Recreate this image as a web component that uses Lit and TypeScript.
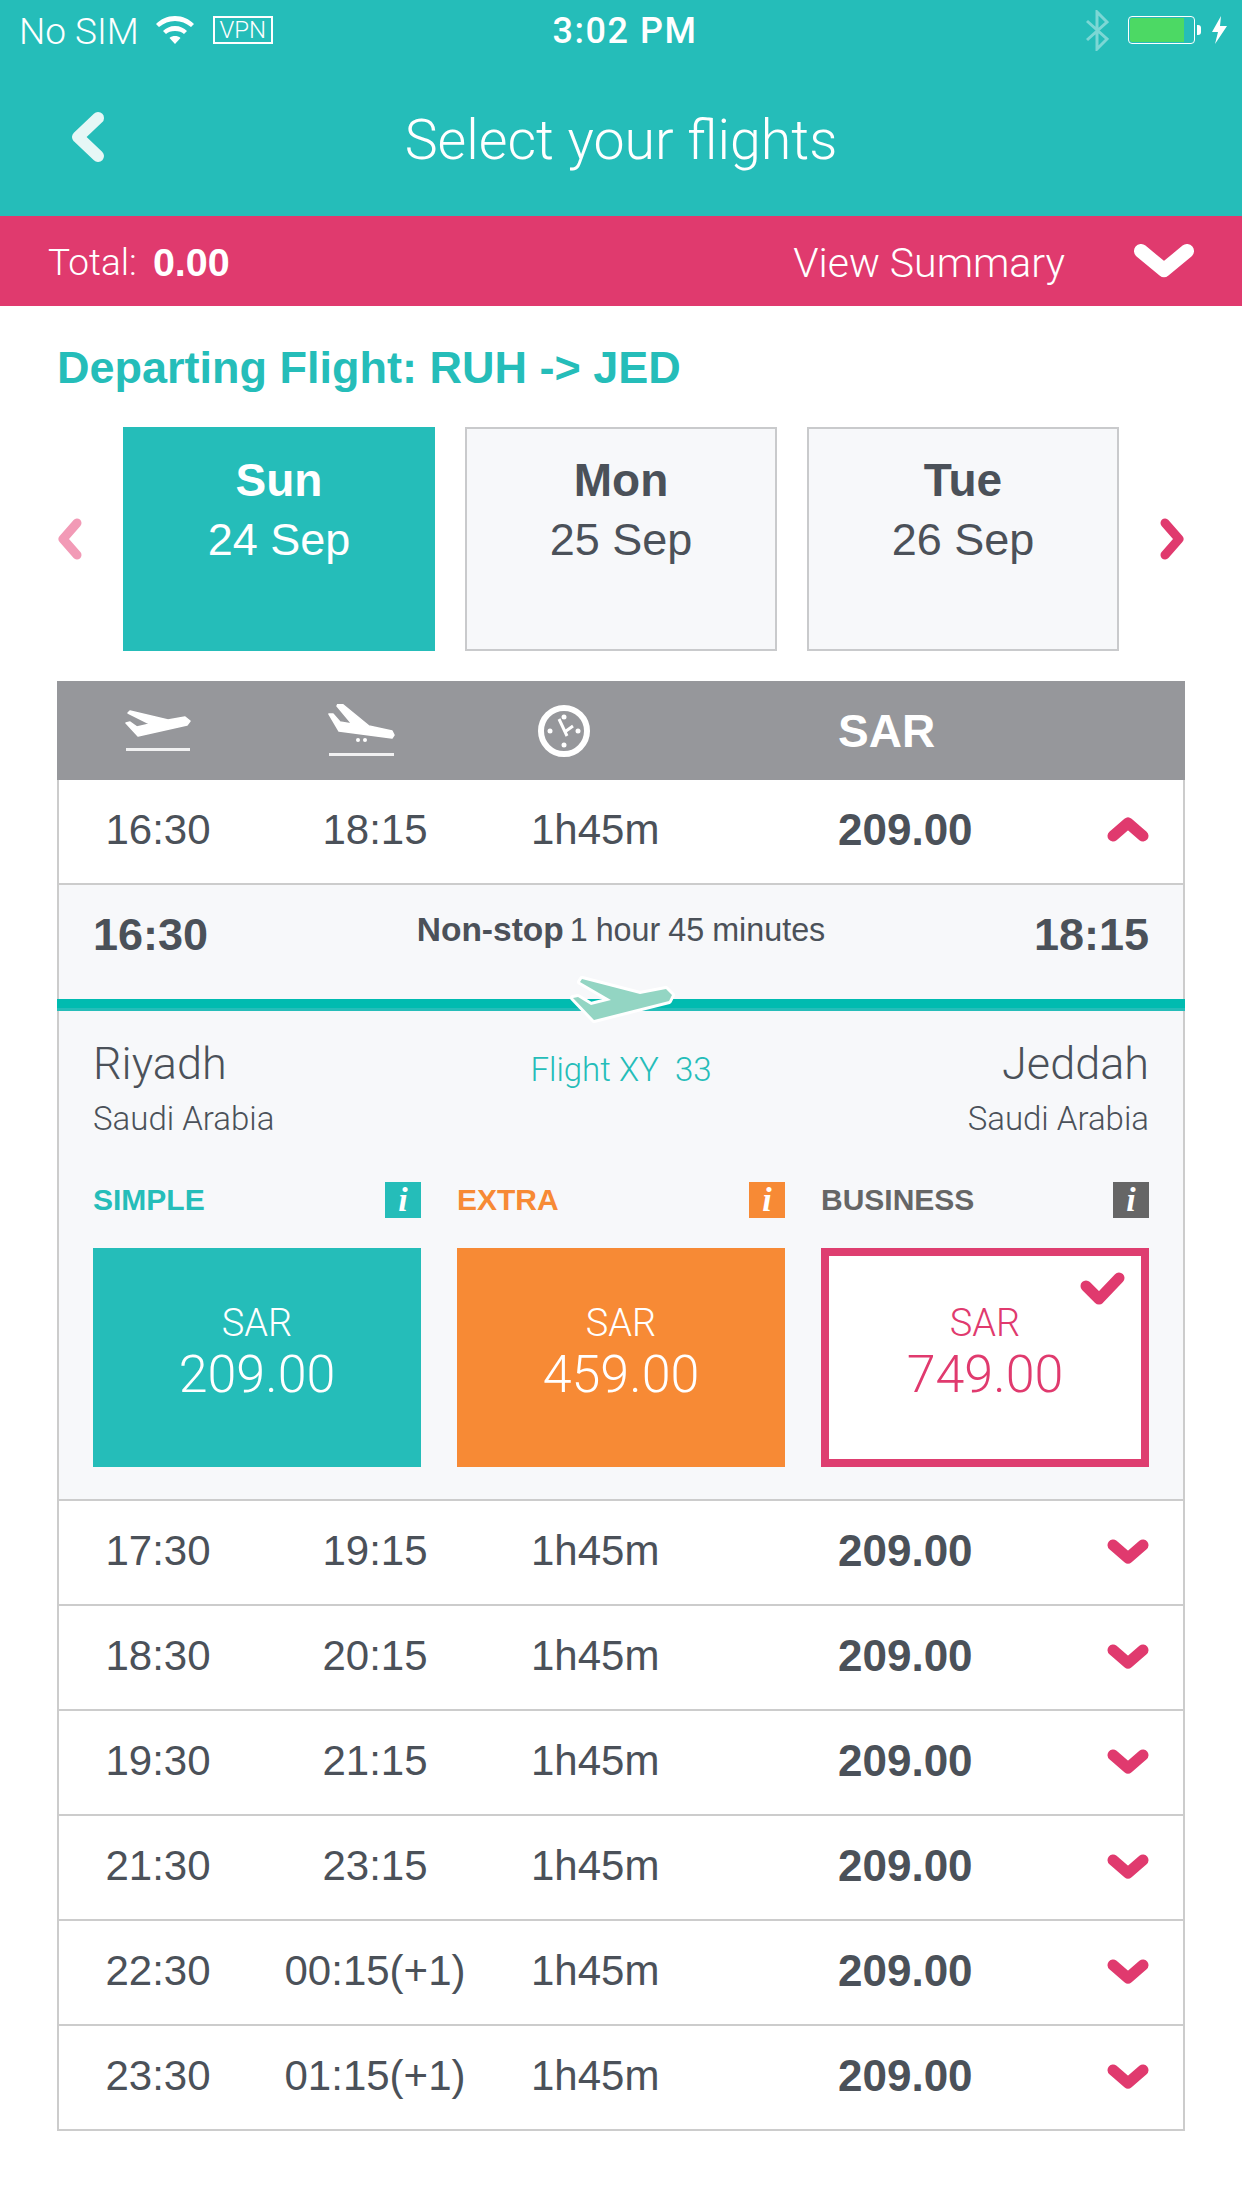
import { LitElement, html, css, svg } from 'lit';
import { customElement } from 'lit/decorators.js';

const flights = [
  ['17:30', '19:15'],
  ['18:30', '20:15'],
  ['19:30', '21:15'],
  ['21:30', '23:15'],
  ['22:30', '00:15(+1)'],
  ['23:30', '01:15(+1)'],
];

const fares = [
  { name: 'SIMPLE', cls: 'simple', price: '209.00' },
  { name: 'EXTRA', cls: 'extra', price: '459.00' },
  { name: 'BUSINESS', cls: 'business', price: '749.00' },
];

const chevron = (dir: 'up' | 'down') => html`
  <svg class="row-chevron" viewBox="0 0 42 26">
    ${dir === 'down'
      ? svg`<path d="M6 7 L21 20 L36 7" />`
      : svg`<path d="M6 19 L21 6 L36 19" />`}
  </svg>
`;

@customElement('app-root')
export class AppRoot extends LitElement {
  static styles = css`
    :host {
      display: block;
      width: 1242px;
      height: 2208px;
      background: #fff;
      font-family: 'Liberation Sans', Arial, sans-serif;
      color: #4b5159;
      overflow: hidden;
      --light: Roboto, 'Liberation Sans', sans-serif;
    }
    svg { display: block; }

    /* top bars */
    .top {
      background: #25bdb9;
      height: 216px;
      color: #fff;
      display: flex;
      flex-direction: column;
    }
    .status {
      height: 60px;
      display: grid;
      grid-template-columns: 1fr 1fr 1fr;
      align-items: center;
      font-size: 36px;
    }
    .status-left {
      display: flex;
      align-items: center;
      padding-left: 19px;
      font-family: var(--light);
      font-weight: 300;
      font-size: 37px;
    }
    .sim { padding-top: 2px; }
    .wifi { width: 38px; height: 28px; margin-left: 17px; }
    .vpn {
      margin-left: 19px;
      width: 60px;
      height: 28px;
      box-sizing: border-box;
      border: 2px solid #fff;
      font-size: 24px;
      line-height: 24px;
      text-align: center;
    }
    .clock-time {
      text-align: center;
      font-family: Roboto, sans-serif;
      font-weight: 500;
      font-size: 36px;
      letter-spacing: 1.5px;
      padding: 2px 0 0 8px;
    }
    .status-right {
      display: flex;
      align-items: center;
      justify-content: flex-end;
      padding-right: 15px;
    }
    .bt { width: 23px; height: 41px; margin-right: 19px; }
    .battery {
      width: 67px;
      height: 28px;
      box-sizing: border-box;
      border: 1px solid #fff;
      border-radius: 4px;
      padding: 1px;
    }
    .battery-fill {
      width: 54px;
      height: 100%;
      background: #4cd964;
      border-radius: 2px 0 0 2px;
    }
    .nub { width: 4px; height: 10px; background: #fff; margin-left: 2px; border-radius: 0 3px 3px 0; }
    .bolt { width: 16px; height: 28px; margin-left: 10px; }

    .nav {
      flex: 1;
      position: relative;
      display: flex;
      align-items: center;
      justify-content: center;
      padding-top: 6px;
    }
    .back { position: absolute; left: 71px; top: 52px; width: 33px; height: 50px; }
    .title { font-family: var(--light); font-weight: 300; font-size: 55.5px; line-height: 64px; }

    .summary {
      background: #e03a6e;
      height: 90px;
      color: #fff;
      display: flex;
      align-items: center;
      padding: 3px 48px 0;
      box-sizing: border-box;
      font-size: 37px;
    }
    .summary span { font-family: var(--light); font-weight: 300; }
    .summary b { margin-left: 16px; font-size: 39.5px; }
    .summary .view { margin-left: auto; font-size: 41px; }
    .view-chevron { width: 60px; height: 34px; margin-left: 69px; margin-top: -3px; }

    /* heading and date tabs */
    .heading {
      margin: 0;
      padding: 37px 57px 0;
      height: 85px;
      box-sizing: border-box;
      font-size: 45px;
      line-height: 50px;
      font-weight: 700;
      color: #25bdb9;
    }
    .dates {
      margin: 36px 57px 0;
      height: 224px;
      display: flex;
      align-items: center;
      justify-content: space-between;
    }
    .arrow { width: 26px; height: 44px; }
    .tabs { display: flex; gap: 30px; }
    .tab {
      width: 312px;
      height: 224px;
      box-sizing: border-box;
      border: 2px solid #c9cacc;
      background: #f7f8fa;
      text-align: center;
      padding-top: 22px;
      font-size: 45px;
      line-height: 59px;
    }
    .tab b { display: block; font-size: 46px; }
    .tab.active { background: #25bdb9; border-color: #25bdb9; color: #fff; }

    /* table */
    .table {
      margin: 30px 57px 0;
      box-sizing: border-box;
      width: 1128px;
      border: solid #ccc;
      border-width: 0 2px;
    }
    .row, .head {
      display: grid;
      grid-template-columns: 198px 236px 345px 1fr 76px;
      align-items: center;
      margin: 0;
    }
    .head {
      height: 99px;
      background: #96979b;
      margin: 0 -2px;
      padding: 0 2px;
      color: #fff;
      font-size: 46px;
      font-weight: 700;
    }
    .head svg { justify-self: center; }
    .head .clock-cell { padding-left: 45px; }
    .head .clock-cell svg { width: 52px; height: 52px; justify-self: start; }
    .takeoff { width: 66px; height: 44px; }
    .landing { width: 70px; height: 54px; margin-right: 26px; }
    .row {
      height: 105px;
      box-sizing: border-box;
      border-bottom: 2px solid #ccc;
      padding-bottom: 3px;
      font-size: 42px;
    }
    .c { text-align: center; }
    .dur { padding-left: 38px; }
    .price { font-size: 44px; font-weight: 700; }
    .row-chevron {
      width: 42px;
      height: 26px;
      fill: none;
      stroke: #e03a6e;
      stroke-width: 11;
      stroke-linecap: round;
      stroke-linejoin: round;
    }

    /* expanded flight */
    .detail {
      height: 616px;
      box-sizing: border-box;
      background: #f7f8fa;
      border-bottom: 2px solid #ccc;
      display: flex;
      flex-direction: column;
    }
    .detail-top {
      height: 114px;
      padding: 0 34px;
      display: flex;
      justify-content: space-between;
      align-items: flex-start;
    }
    .big-time { font-size: 45px; font-weight: 700; line-height: 50px; margin-top: 25px; }
    .stop { font-size: 32.3px; line-height: 38px; margin-top: 26px; word-spacing: -1px; }
    .stop b { font-size: 33.5px; margin-right: -2px; }
    .rail {
      position: relative;
      height: 12px;
      margin: 0 -2px;
      background: #00bbb0;
      border-bottom: 3px solid #25bdb9;
      box-sizing: border-box;
    }
    .plane { position: absolute; left: 511px; top: -24px; width: 110px; height: 50px; }
    .route {
      padding: 28px 34px 0;
      display: grid;
      grid-template-columns: 1fr auto 1fr;
    }
    .city { font-family: var(--light); font-weight: 300; font-size: 45px; line-height: 50px; }
    .country { font-family: var(--light); font-weight: 300; font-size: 33px; line-height: 38px; margin-top: 11px; }
    .right { text-align: right; }
    .flight-no {
      font-family: var(--light);
      font-weight: 300;
      font-size: 33px;
      line-height: 38px;
      color: #25bdb9;
      margin-top: 12px;
      white-space: pre;
    }

    .fares {
      margin-top: 44px;
      padding: 0 34px;
      display: grid;
      grid-template-columns: repeat(3, 328px);
      gap: 30px 36px;
    }
    .fare-head {
      height: 36px;
      display: flex;
      align-items: center;
      justify-content: space-between;
      font-size: 30px;
      font-weight: 700;
    }
    .info {
      width: 36px;
      height: 36px;
      color: #fff;
      font-family: 'Liberation Serif', serif;
      font-style: italic;
      font-size: 34px;
      line-height: 36px;
      text-align: center;
    }
    .fare-box {
      position: relative;
      height: 219px;
      box-sizing: border-box;
      margin-top: 30px;
      color: #fff;
      text-align: center;
      padding-top: 55px;
      font-family: var(--light);
      font-weight: 300;
      font-size: 52px;
      line-height: 64px;
    }
    .fare-box span { display: block; font-size: 38px; line-height: 40px; }
    .simple .fare-head { color: #25bdb9; }
    .simple .info, .simple .fare-box { background: #25bdb9; }
    .extra .fare-head { color: #f78a35; }
    .extra .info, .extra .fare-box { background: #f78a35; }
    .business .fare-head { color: #666; }
    .business .info { background: #666; }
    .business .fare-box {
      background: #fff;
      border: 8px solid #de3e70;
      color: #e03a6e;
      padding-top: 47px;
    }
    .check {
      position: absolute;
      right: 16px;
      top: 16px;
      width: 45px;
      height: 33px;
      fill: none;
      stroke: #e03a6e;
      stroke-width: 11;
      stroke-linecap: round;
      stroke-linejoin: round;
    }
  `;

  row(dep: string, arr: string, dir: 'up' | 'down') {
    return html`
      <div class="row">
        <div class="c">${dep}</div>
        <div class="c">${arr}</div>
        <div class="dur">1h45m</div>
        <div class="price">209.00</div>
        <div>${chevron(dir)}</div>
      </div>
    `;
  }

  render() {
    return html`
      <div class="top">
        <div class="status">
          <div class="status-left">
            <span class="sim">No SIM</span>
            <svg class="wifi" viewBox="0 0 38 28">
              <path fill="#fff" d="M19 0 C27 0 33 3 38 8 L35 11 C30 7 25 5 19 5 C13 5 8 7 3 11 L0 8 C5 3 11 0 19 0Z" />
              <path fill="#fff" d="M19 10 C24 10 28 12 31 15 L28 18 C26 16 23 15 19 15 C15 15 12 16 10 18 L7 15 C10 12 14 10 19 10Z" />
              <path fill="#fff" d="M19 20 C21 20 23 20.5 24.5 22 L19 28 L13.5 22 C15 20.5 17 20 19 20Z" />
            </svg>
            <div class="vpn">VPN</div>
          </div>
          <div class="clock-time">3:02 PM</div>
          <div class="status-right">
            <svg class="bt" viewBox="0 0 23 41">
              <path fill="none" stroke="#fff" stroke-opacity=".4" stroke-width="3" d="M1 11 L21 29 L11 39 V2 L21 12 L1 30" />
            </svg>
            <div class="battery"><div class="battery-fill"></div></div>
            <div class="nub"></div>
            <svg class="bolt" viewBox="0 0 16 28">
              <path fill="#fff" d="M10 0 L1 16 H7 L4 28 L16 10 H9 Z" />
            </svg>
          </div>
        </div>
        <div class="nav">
          <svg class="back" viewBox="0 0 33 50">
            <path fill="none" stroke="#e6f7f6" stroke-width="12" stroke-linecap="round" stroke-linejoin="round" d="M27 6 L7 25 L27 44" />
          </svg>
          <div class="title">Select your flights</div>
        </div>
      </div>

      <div class="summary">
        <span>Total:</span><b>0.00</b>
        <span class="view">View Summary</span>
        <svg class="view-chevron" viewBox="0 0 60 34">
          <path fill="none" stroke="#fff" stroke-width="14" stroke-linecap="round" stroke-linejoin="round" d="M7 7 L30 26 L53 7" />
        </svg>
      </div>

      <h2 class="heading">Departing Flight: RUH -&gt; JED</h2>

      <div class="dates">
        <svg class="arrow" viewBox="0 0 26 44">
          <path fill="none" stroke="#f29ab6" stroke-width="9" stroke-linecap="round" stroke-linejoin="round" d="M20 6 L6 22 L20 38" />
        </svg>
        <div class="tabs">
          <div class="tab active"><b>Sun</b>24 Sep</div>
          <div class="tab"><b>Mon</b>25 Sep</div>
          <div class="tab"><b>Tue</b>26 Sep</div>
        </div>
        <svg class="arrow" viewBox="0 0 26 44">
          <path fill="none" stroke="#e03a6e" stroke-width="9" stroke-linecap="round" stroke-linejoin="round" d="M6 6 L20 22 L6 38" />
        </svg>
      </div>

      <div class="table">
        <div class="head">
          <svg class="takeoff" viewBox="0 0 66 44">
            <path fill="#fff" stroke="#fff" stroke-width="1.5" stroke-linejoin="round" d="M5 2 L43 11 L60 8 L65 12 L62 16 L13 27 L1 14 L5 13 L12 18 L25 15 L3 4Z" />
            <rect x="1" y="39" width="64" height="3" fill="#f1f1f2" />
          </svg>
          <svg class="landing" viewBox="0 0 70 54">
            <path fill="#fff" stroke="#fff" stroke-width="1.5" stroke-linejoin="round" d="M11 0 L15 0 L42 22 L65 27 L67 31 L65 34 L12 27 L2 10 L6 10 L13 18 L25 20 L10 2Z" />
            <circle cx="31" cy="36" r="2" fill="#fff" />
            <circle cx="38" cy="36" r="2" fill="#fff" />
            <rect x="2" y="49" width="65" height="3" fill="#f1f1f2" />
          </svg>
          <div class="clock-cell">
            <svg viewBox="0 0 52 52">
              <circle cx="26" cy="26" r="23" fill="none" stroke="#fff" stroke-width="6" />
              <circle cx="26" cy="12" r="2.5" fill="#fff" />
              <circle cx="26" cy="40" r="2.5" fill="#fff" />
              <circle cx="12" cy="26" r="2.5" fill="#fff" />
              <circle cx="40" cy="26" r="2.5" fill="#fff" />
              <path fill="none" stroke="#fff" stroke-width="3" d="M21 14 L29 31 M28 26 L35 21" />
            </svg>
          </div>
          <div>SAR</div>
          <div></div>
        </div>

        ${this.row('16:30', '18:15', 'up')}

        <div class="detail">
          <div class="detail-top">
            <div class="big-time">16:30</div>
            <div class="stop"><b>Non-stop</b> 1 hour 45 minutes</div>
            <div class="big-time">18:15</div>
          </div>
          <div class="rail">
            <svg class="plane" viewBox="0 0 110 50">
              <path fill="#93d5c3" stroke="#fff" stroke-width="6" stroke-linejoin="round" paint-order="stroke" d="M14 4 L72 19 L98 14 L104 20 L101 26 L26 45 L5 23 L10 22 L23 30 L43 25 L12 7Z" />
            </svg>
          </div>
          <div class="route">
            <div>
              <div class="city">Riyadh</div>
              <div class="country">Saudi Arabia</div>
            </div>
            <div class="flight-no">Flight XY  33</div>
            <div class="right">
              <div class="city">Jeddah</div>
              <div class="country">Saudi Arabia</div>
            </div>
          </div>
          <div class="fares">
            ${fares.map(
              (f) => html`
                <div class=${f.cls}>
                  <div class="fare-head"><span>${f.name}</span><span class="info">i</span></div>
                  <div class="fare-box">
                    <span>SAR</span>${f.price}
                    ${f.cls === 'business'
                      ? html`<svg class="check" viewBox="0 0 45 33"><path d="M6 14 L19 27 L39 6" /></svg>`
                      : ''}
                  </div>
                </div>
              `
            )}
          </div>
        </div>

        ${flights.map((f) => this.row(f[0], f[1], 'down'))}
      </div>
    `;
  }
}
